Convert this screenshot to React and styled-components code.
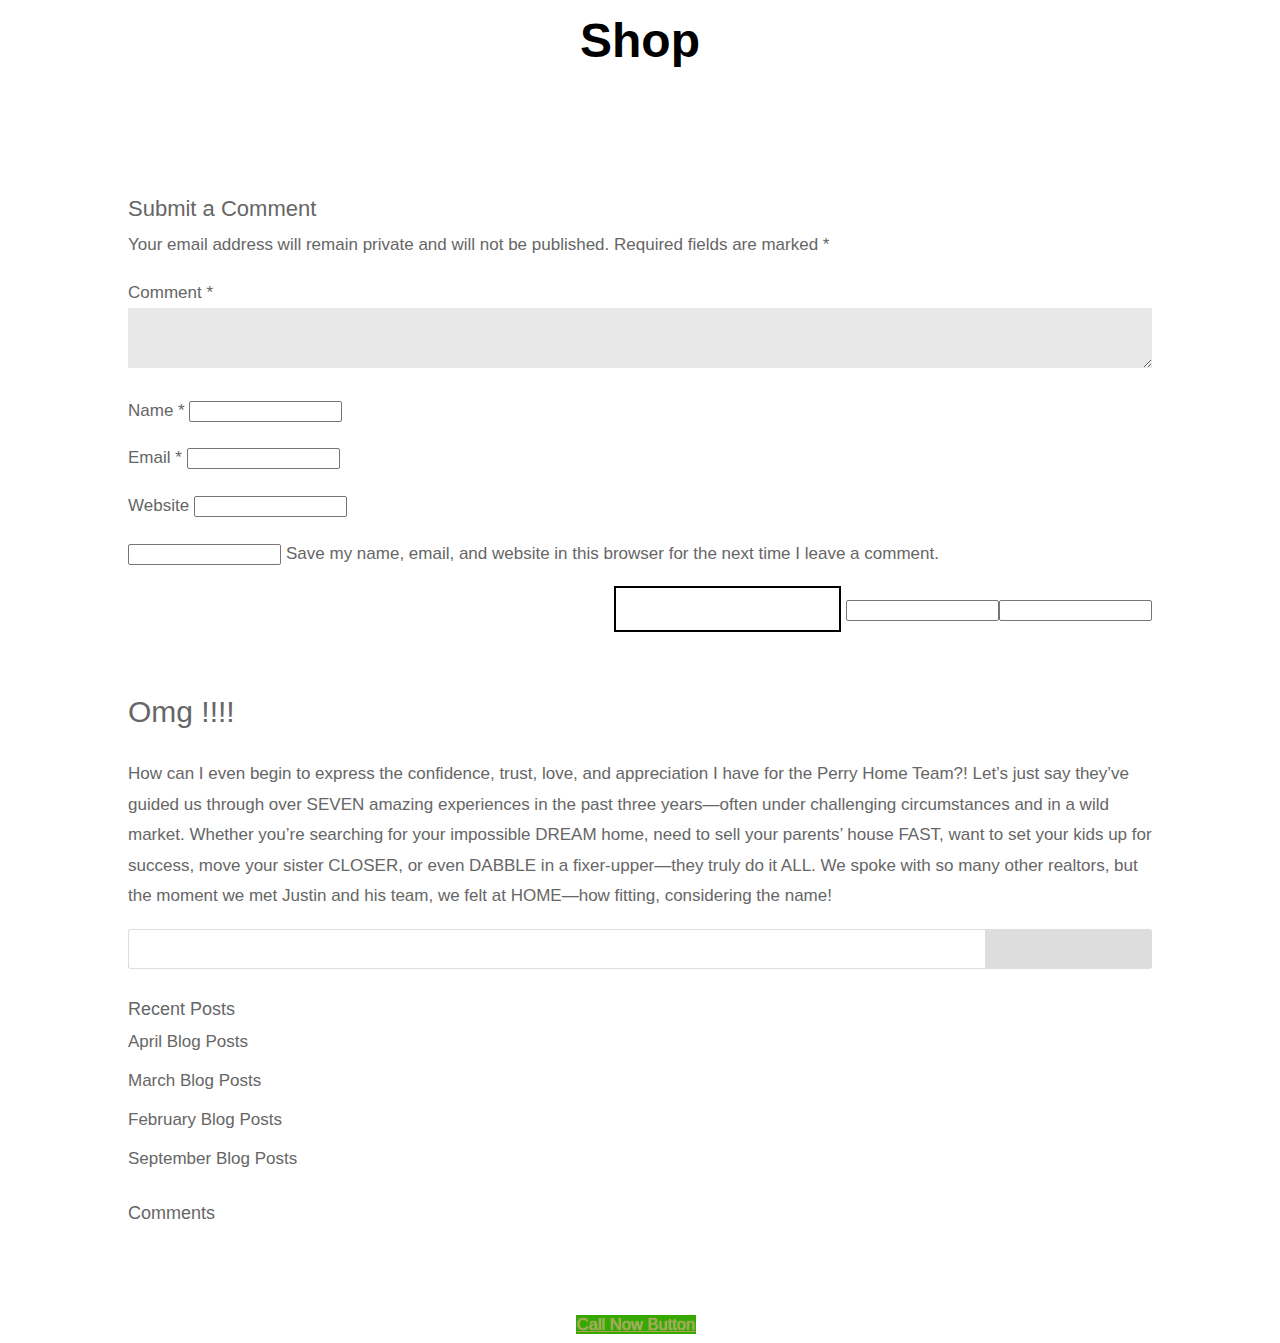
import React from 'react';
import styled, { createGlobalStyle } from 'styled-components';

const GlobalStyle = createGlobalStyle`
  html, body {
    margin: 0;
    padding: 0;
    background: #fff;
  }
  body {
    font-family: "Liberation Sans", Arial, sans-serif;
    color: #666;
  }
  * { box-sizing: border-box; }
`;

const Page = styled.div`
  width: 1280px;
  min-height: 1343px;
  display: flex;
  flex-direction: column;
  align-items: center;
`;

const PageTitle = styled.h1`
  margin: 14px 0 0;
  font-size: 48px;
  line-height: 54px;
  font-weight: 700;
  color: #000;
  text-align: center;
`;

const Content = styled.div`
  width: 1024px;
  display: flex;
  flex-direction: column;
`;

const CommentForm = styled.form`
  margin-top: 127px;
  display: flex;
  flex-direction: column;
`;

const FormTitle = styled.h3`
  margin: 0;
  font-size: 22px;
  line-height: 28px;
  font-weight: 400;
  color: #666;
`;

const Notes = styled.p`
  margin: 11px 0 0;
  font-size: 17px;
  line-height: 22px;
`;

const FieldLabel = styled.label`
  display: block;
  font-size: 17px;
  line-height: 22px;
`;

const CommentBlock = styled.div`
  margin-top: 26px;
  display: flex;
  flex-direction: column;
  gap: 4px;
`;

const CommentArea = styled.textarea`
  width: 100%;
  height: 60px;
  border: none;
  background: #e8e8e8;
  resize: vertical;
  padding: 0;
  margin: 0;
  display: block;
`;

const InlineRow = styled.p`
  margin: ${p => p.$top || 26}px 0 0;
  font-size: 17px;
  line-height: 22px;
  display: flex;
  align-items: center;
  gap: ${p => p.$gap || 5}px;
`;

const SmallInput = styled.input`
  width: 153px;
  height: 21px;
  border: 1px solid #767676;
  border-radius: 2px;
  padding: 1px 2px;
  margin: 0;
  background: #fff;
  font-size: 13px;
`;

const SubmitRow = styled.div`
  margin-top: 21px;
  display: flex;
  justify-content: flex-end;
  align-items: center;
  gap: 5px;
`;

const SubmitBox = styled.div`
  width: 227px;
  height: 46px;
  border: 2px solid #000;
  background: #fff;
`;

const HiddenPair = styled.div`
  display: flex;
  margin-top: 3px;
`;

const ReviewTitle = styled.h2`
  margin: 62px 0 0;
  font-size: 30px;
  line-height: 36px;
  font-weight: 400;
  color: #666;
`;

const ReviewText = styled.p`
  margin: 29px 0 0;
  font-size: 17px;
  line-height: 30.5px;
`;

const SearchForm = styled.div`
  margin-top: 17px;
  display: flex;
  height: 40px;
`;

const SearchInput = styled.input`
  flex: 1;
  height: 40px;
  border: 1px solid #ddd;
  border-right: none;
  border-radius: 3px 0 0 3px;
  margin: 0;
  background: #fff;
`;

const SearchButton = styled.button`
  width: 167px;
  height: 40px;
  border: none;
  border-radius: 0 3px 3px 0;
  background: #ddd;
  margin: 0;
`;

const WidgetTitle = styled.h4`
  margin: ${p => p.$top}px 0 0;
  font-size: 18px;
  line-height: 24px;
  font-weight: 400;
  color: #666;
`;

const PostList = styled.ul`
  list-style: none;
  margin: 10px 0 0;
  padding: 0;
  display: flex;
  flex-direction: column;
  gap: 17px;
`;

const PostLink = styled.a`
  display: block;
  font-size: 17px;
  line-height: 22px;
  color: #666;
  text-decoration: none;
`;

const CallButton = styled.a`
  margin-top: 90px;
  margin-right: 8px;
  display: inline-block;
  background: #36a800;
  color: #b0a058;
  font-size: 16.5px;
  line-height: 19px;
  padding: 0 1px;
  text-decoration: underline;
  letter-spacing: 0;
  text-shadow: 0 0 1px rgba(255, 255, 255, 0.6);
`;

const posts = ['April Blog Posts', 'March Blog Posts', 'February Blog Posts', 'September Blog Posts'];

export default function App() {
  return (
    <Page>
      <GlobalStyle />
      <PageTitle>Shop</PageTitle>
      <Content>
        <CommentForm onSubmit={e => e.preventDefault()}>
          <FormTitle>Submit a Comment</FormTitle>
          <Notes>Your email address will remain private and will not be published. Required fields are marked *</Notes>
          <CommentBlock>
            <FieldLabel>Comment *</FieldLabel>
            <CommentArea />
          </CommentBlock>
          <InlineRow $top={32} $gap={4}>Name * <SmallInput /></InlineRow>
          <InlineRow $top={25}>Email * <SmallInput /></InlineRow>
          <InlineRow>Website <SmallInput /></InlineRow>
          <InlineRow>
            <SmallInput /> Save my name, email, and website in this browser for the next time I leave a comment.
          </InlineRow>
          <SubmitRow>
            <SubmitBox />
            <HiddenPair>
              <SmallInput />
              <SmallInput />
            </HiddenPair>
          </SubmitRow>
        </CommentForm>

        <ReviewTitle>Omg !!!!</ReviewTitle>
        <ReviewText>
          How can I even begin to express the confidence, trust, love, and appreciation I have for the Perry Home Team?! Let’s just say they’ve guided us through over SEVEN amazing experiences in the past three years—often under challenging circumstances and in a wild market. Whether you’re searching for your impossible DREAM home, need to sell your parents’ house FAST, want to set your kids up for success, move your sister CLOSER, or even DABBLE in a fixer-upper—they truly do it ALL. We spoke with so many other realtors, but the moment we met Justin and his team, we felt at HOME—how fitting, considering the name!
        </ReviewText>

        <SearchForm>
          <SearchInput />
          <SearchButton />
        </SearchForm>

        <WidgetTitle $top={28}>Recent Posts</WidgetTitle>
        <PostList>
          {posts.map(p => (
            <li key={p}><PostLink href="#">{p}</PostLink></li>
          ))}
        </PostList>

        <WidgetTitle $top={31}>Comments</WidgetTitle>
      </Content>
      <CallButton href="#">Call Now Button</CallButton>
    </Page>
  );
}
